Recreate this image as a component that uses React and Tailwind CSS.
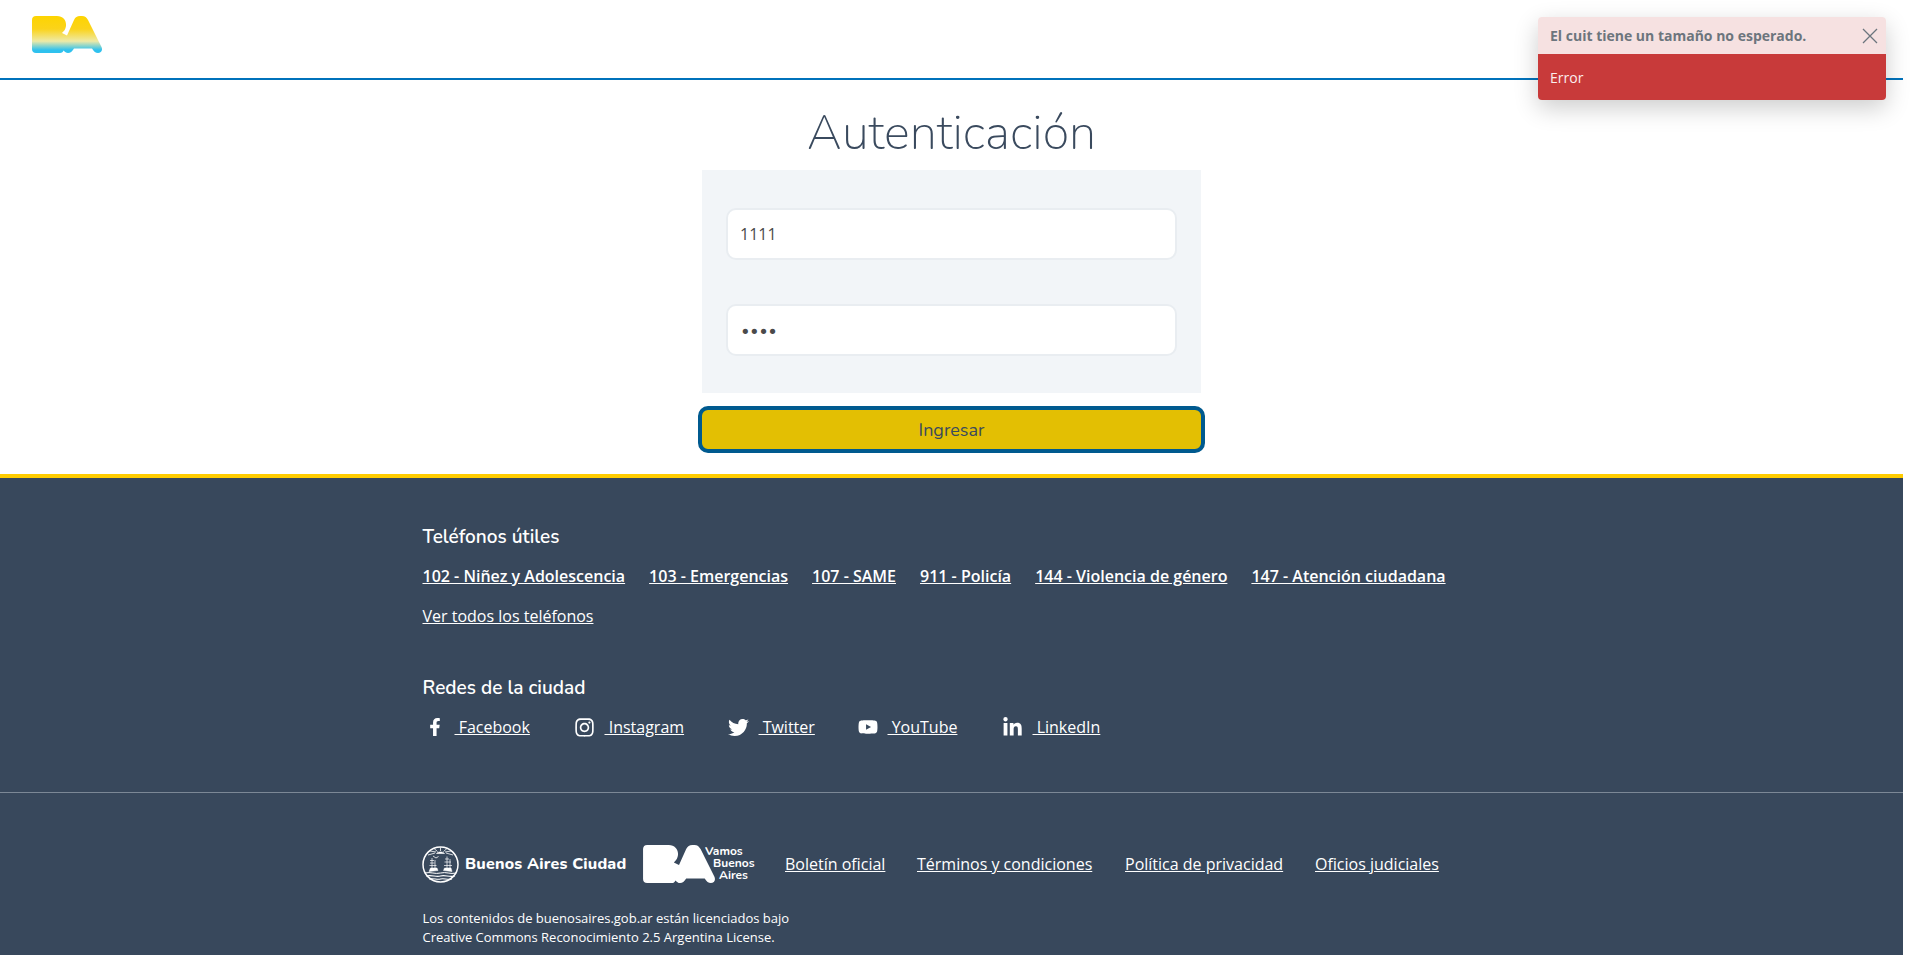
import React from "react";
import { FaFacebookF, FaInstagram, FaTwitter, FaYoutube, FaLinkedinIn } from "react-icons/fa";

const BA_PATH =
  "M4 0H25C32 0 35.500 6 33.500 12C33 14 31.500 15.500 30 17L35 19.500L42 4C43.500 1 45 0 48 0H50C53 0 54.500 1.500 56 4L69.500 31C71 34.500 69 37 66 37C63.500 37 62 35.500 60 32.500H42C40 35.500 38.500 37 36 37C34 37 33 36 31.500 34.500C31 36 30 37 28 37H4C1.500 37 0 35.500 0 33V4C0 1.500 1.500 0 4 0Z";

const phones = [
  "102 - Niñez y Adolescencia",
  "103 - Emergencias",
  "107 - SAME",
  "911 - Policía",
  "144 - Violencia de género",
  "147 - Atención ciudadana",
];

const socials = [
  { name: "Facebook", icon: FaFacebookF, size: "text-[18px]", width: "w-[150px]" },
  { name: "Instagram", icon: FaInstagram, size: "text-[21px]", width: "w-[154px]" },
  { name: "Twitter", icon: FaTwitter, size: "text-[21px]", width: "w-[129px]" },
  { name: "YouTube", icon: FaYoutube, size: "text-[20px]", width: "w-[145px]" },
  { name: "LinkedIn", icon: FaLinkedinIn, size: "text-[21px]", width: "w-[120px]" },
];

const legalLinks = [
  { name: "Boletín oficial", width: "w-[132px]" },
  { name: "Términos y condiciones", width: "w-[208px]" },
  { name: "Política de privacidad", width: "w-[190px]" },
  { name: "Oficios judiciales", width: "" },
];

const BaLogo = () => (
  <svg width="70" height="37" viewBox="0 0 70 37">
    <defs>
      <linearGradient id="baGrad" x1="0" y1="0" x2="0" y2="1">
        <stop offset="0" stopColor="#fdd400" />
        <stop offset="0.35" stopColor="#fbd31a" />
        <stop offset="0.68" stopColor="#eeeaa6" />
        <stop offset="0.92" stopColor="#2fc1ee" />
        <stop offset="1" stopColor="#2fc1ee" />
      </linearGradient>
    </defs>
    <path d={BA_PATH} fill="url(#baGrad)" />
  </svg>
);

// escudo de la ciudad: sol, dos barcos y olas
const Crest = () => (
  <svg width="37" height="39" viewBox="0 0 37 39" fill="none" stroke="white">
    <circle cx="18.500" cy="19.500" r="17.500" strokeWidth="1.500" />
    <path d="M6 10L13 8M8 6L14 7M12 3.500L15.500 6.500M18.500 2.500V6M25 3.500L21.500 6.500M29 6L23 7M31 10L24 8" strokeWidth="0.800" />
    <path d="M14.500 8.500C16 6.500 21 6.500 22.500 8.500Z" fill="white" strokeWidth="0.600" />
    <path d="M11 11L14 13L16.500 11.500" strokeWidth="0.800" />
    <path d="M7 26.500L16 25.500L15 23H8.500ZM21.500 25.500L30 26.500L29 23H22.500Z" fill="white" strokeWidth="0.500" />
    <path d="M10 23V13M13 23V15M8 15.500H12M8 18H12.500M7.500 20.500H14.500M25 23V11.500M28 23V14M23 14H27M22.500 17H29M22 20.500H30" strokeWidth="0.700" />
    <path d="M2.500 28C9 26.500 13 29.500 18.500 28C24 26.500 28 29.500 34.500 28" strokeWidth="1" />
    <path d="M4 31C10 29.500 14 32.500 18.500 31C23 29.500 27 32.500 33 31" strokeWidth="1.200" />
    <path d="M7 34C12 33 15 35 18.500 34C22 33 25 35 30 34" strokeWidth="1.200" />
  </svg>
);

export default function App() {
  return (
    <div className="relative h-[955px] overflow-hidden bg-white font-['Open_Sans',sans-serif]">
      <div className="w-[1903px]">
        <header className="h-[80px] border-b-2 border-[#0072bb] pl-[32px] pt-[16px]">
          <BaLogo />
        </header>

        <main className="flex h-[394px] flex-col items-center">
          <h1 className="h-[90px] pt-[17px] text-center font-['Nunito',sans-serif] text-[49px] leading-[72px] font-extralight text-[#3a4a5e]">
            Autenticación
          </h1>
          <div className="flex h-[223px] w-[499px] flex-col gap-[44px] bg-[#f2f5f8] px-[24px] pt-[38px]">
            <input
              readOnly
              value="1111"
              className="h-[52px] w-full rounded-[10px] border-2 border-[#e9edf1] bg-white px-[12px] text-[16px] text-[#4a4a4a] outline-none"
            />
            <input
              readOnly
              type="password"
              value="1111"
              className="h-[52px] w-full rounded-[10px] border-2 border-[#e9edf1] bg-white px-[12px] pt-[3px] font-['DejaVu_Sans',sans-serif] text-[18px] tracking-[-1.500px] text-[#4a4a4a] outline-none"
            />
          </div>
          <button className="mt-[13px] h-[47px] w-[507px] rounded-[10px] border-4 border-[#005a8f] bg-[#e3bf03] pt-[1px] font-['Nunito',sans-serif] text-[18px] text-[#3a4a5e]">
            Ingresar
          </button>
        </main>

        <footer className="h-[481px] border-t-4 border-[#ffcc00] bg-[#38485c] text-white">
          <div className="pl-[422.500px]">
            <h2 className="pt-[46px] font-['Nunito',sans-serif] text-[19px] leading-[27px] font-semibold">
              Teléfonos útiles
            </h2>
            <div className="mt-[12px] flex gap-[24px]">
              {phones.map((phone) => (
                <a key={phone} className="text-[16px] leading-[26px] font-semibold underline">
                  {phone}
                </a>
              ))}
            </div>
            <a className="mt-[14px] block text-[16px] leading-[26px] underline">Ver todos los teléfonos</a>
            <h2 className="mt-[46px] font-['Nunito',sans-serif] text-[19px] leading-[27px] font-semibold">
              Redes de la ciudad
            </h2>
            <div className="mt-[12px] flex">
              {socials.map(({ name, icon: Icon, size, width }) => (
                <div key={name} className={`flex items-center ${width}`}>
                  <span className="mr-[8px] flex w-[24px] justify-center">
                    <Icon className={size} />
                  </span>
                  <a className="whitespace-pre text-[16px] leading-[26px] underline">{" " + name}</a>
                </div>
              ))}
            </div>
          </div>

          <div className="mt-[52px] border-t border-[#7c8896]" />

          <div className="pl-[422px]">
            <div className="mt-[51px] flex h-[40px] items-center">
              <Crest />
              <span className="ml-[6px] w-[178px] font-['Nunito',sans-serif] text-[16px] font-extrabold tracking-[0.200px] whitespace-nowrap">
                Buenos Aires Ciudad
              </span>
              <svg width="72" height="38" viewBox="0 0 70 37">
                <path d={BA_PATH} fill="white" />
              </svg>
              <div className="-ml-[10px] flex w-[50px] -translate-y-[1px] flex-col font-['Nunito',sans-serif] text-[12px] leading-[12px] font-bold">
                <span>Vamos</span>
                <span className="pl-[8px]">Buenos</span>
                <span className="pl-[14px]">Aires</span>
              </div>
              <div className="ml-[30px] flex">
                {legalLinks.map(({ name, width }) => (
                  <a key={name} className={`text-[16px] whitespace-nowrap underline ${width}`}>
                    {name}
                  </a>
                ))}
              </div>
            </div>
            <p className="mt-[25px] pl-[0.500px] text-[13px] leading-[19px]">
              Los contenidos de buenosaires.gob.ar están licenciados bajo
              <br />
              Creative Commons Reconocimiento 2.5 Argentina License.
            </p>
          </div>
        </footer>
      </div>

      <div className="absolute top-[17px] left-[1538px] w-[348px] overflow-hidden rounded-[4px] shadow-[0_8px_24px_rgba(0,0,0,0.2)]">
        <div className="flex h-[37px] items-center justify-between bg-[#f6e1e1] pr-[8px] pl-[12px]">
          <span className="text-[14px] font-bold text-[#6c757d]">El cuit tiene un tamaño no esperado.</span>
          <svg width="16" height="16" viewBox="0 0 16 16" stroke="#6c757d" strokeWidth="1.300">
            <path d="M1 1L15 15M15 1L1 15" />
          </svg>
        </div>
        <div className="flex h-[46px] items-center bg-[#c83a3a] px-[12px] text-[14px] text-[#fbeeee]">Error</div>
      </div>
    </div>
  );
}
